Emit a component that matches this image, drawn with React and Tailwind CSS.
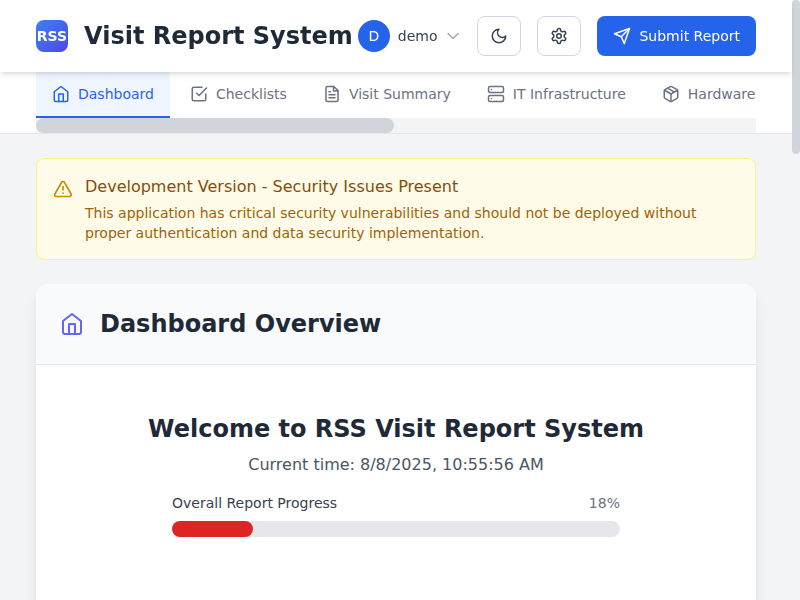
import React from "react";

function Icon({ size = 18, strokeWidth = 2, className = "", children }) {
  return (
    <svg
      width={size}
      height={size}
      viewBox="0 0 24 24"
      fill="none"
      stroke="currentColor"
      strokeWidth={strokeWidth}
      strokeLinecap="round"
      strokeLinejoin="round"
      className={`shrink-0 ${className}`}
    >
      {children}
    </svg>
  );
}

const homePaths = (
  <>
    <path d="m3 9 9-7 9 7v11a2 2 0 0 1-2 2H5a2 2 0 0 1-2-2z" />
    <polyline points="9 22 9 12 15 12 15 22" />
  </>
);

const tabs = [
  { label: "Dashboard", active: true, icon: homePaths },
  {
    label: "Checklists",
    icon: (
      <>
        <polyline points="9 11 12 14 22 4" />
        <path d="M21 12v7a2 2 0 0 1-2 2H5a2 2 0 0 1-2-2V5a2 2 0 0 1 2-2h11" />
      </>
    ),
  },
  {
    label: "Visit Summary",
    icon: (
      <>
        <path d="M14.5 2H6a2 2 0 0 0-2 2v16a2 2 0 0 0 2 2h12a2 2 0 0 0 2-2V7.5L14.5 2z" />
        <polyline points="14 2 14 8 20 8" />
        <line x1="16" y1="13" x2="8" y2="13" />
        <line x1="16" y1="17" x2="8" y2="17" />
        <line x1="10" y1="9" x2="8" y2="9" />
      </>
    ),
  },
  {
    label: "IT Infrastructure",
    icon: (
      <>
        <rect x="2" y="2" width="20" height="8" rx="2" />
        <rect x="2" y="14" width="20" height="8" rx="2" />
        <line x1="6" y1="6" x2="6.01" y2="6" />
        <line x1="6" y1="18" x2="6.01" y2="18" />
      </>
    ),
  },
  {
    label: "Hardware",
    icon: (
      <>
        <path d="m7.5 4.27 9 5.15" />
        <path d="M21 8a2 2 0 0 0-1-1.73l-7-4a2 2 0 0 0-2 0l-7 4A2 2 0 0 0 3 8v8a2 2 0 0 0 1 1.73l7 4a2 2 0 0 0 2 0l7-4A2 2 0 0 0 21 16Z" />
        <path d="m3.3 7 8.7 5 8.7-5" />
        <path d="M12 22V12" />
      </>
    ),
  },
];

function Header() {
  return (
    <header className="relative z-10 flex h-[72px] shrink-0 items-center justify-between bg-white px-9 shadow-md will-change-transform">
      <div className="flex items-center gap-4">
        <div className="flex size-8 items-center justify-center rounded-lg bg-linear-to-br/srgb from-[#3b82f6] to-[#4f46e5] text-sm font-bold text-white">
          RSS
        </div>
        <h1 className="text-2xl font-bold whitespace-nowrap text-[#1f2937]">Visit Report System</h1>
      </div>
      <div className="flex items-center gap-4">
        <div className="flex items-center gap-2">
          <div className="flex size-8 items-center justify-center rounded-full bg-[#2563eb] text-sm text-white">D</div>
          <span className="text-sm text-[#374151]">demo</span>
          <Icon size={16} strokeWidth={2} className="text-[#9ca3af]">
            <path d="m19.5 8.25-7.5 7.5-7.5-7.5" />
          </Icon>
        </div>
        <button className="flex h-10 w-11 items-center justify-center rounded-lg border border-[#d1d5db] bg-white text-[#374151]">
          <Icon>
            <path d="M12 3a6 6 0 0 0 9 9 9 9 0 1 1-9-9Z" />
          </Icon>
        </button>
        <button className="flex h-10 w-11 items-center justify-center rounded-lg border border-[#d1d5db] bg-white text-[#374151]">
          <Icon>
            <path d="M12.22 2h-.44a2 2 0 0 0-2 2v.18a2 2 0 0 1-1 1.73l-.43.25a2 2 0 0 1-2 0l-.15-.08a2 2 0 0 0-2.73.73l-.22.38a2 2 0 0 0 .73 2.73l.15.1a2 2 0 0 1 1 1.72v.51a2 2 0 0 1-1 1.74l-.15.09a2 2 0 0 0-.73 2.73l.22.38a2 2 0 0 0 2.73.73l.15-.08a2 2 0 0 1 2 0l.43.25a2 2 0 0 1 1 1.73V20a2 2 0 0 0 2 2h.44a2 2 0 0 0 2-2v-.18a2 2 0 0 1 1-1.73l.43-.25a2 2 0 0 1 2 0l.15.08a2 2 0 0 0 2.73-.73l.22-.39a2 2 0 0 0-.73-2.73l-.15-.08a2 2 0 0 1-1-1.74v-.5a2 2 0 0 1 1-1.74l.15-.09a2 2 0 0 0 .73-2.73l-.22-.38a2 2 0 0 0-2.73-.73l-.15.08a2 2 0 0 1-2 0l-.43-.25a2 2 0 0 1-1-1.73V4a2 2 0 0 0-2-2z" />
            <circle cx="12" cy="12" r="3" />
          </Icon>
        </button>
        <button className="flex h-10 items-center gap-2 rounded-lg bg-[#2563eb] px-4 text-sm whitespace-nowrap text-white">
          <Icon>
            <path d="m22 2-7 20-4-9-9-4Z" />
            <path d="M22 2 11 13" />
          </Icon>
          Submit Report
        </button>
      </div>
    </header>
  );
}

function Tabs() {
  return (
    <nav className="shrink-0 border-b border-[#e5e7eb] bg-white px-9">
      <div className="flex gap-1 overflow-hidden">
        {tabs.map((tab) => (
          <div
            key={tab.label}
            className={`flex h-[46px] shrink-0 items-center gap-2 border-b-2 px-4 text-sm ${
              tab.active ? "border-[#2563eb] bg-[#eff6ff] text-[#2563eb]" : "border-transparent text-[#6b7280]"
            }`}
          >
            <Icon>{tab.icon}</Icon>
            {tab.label}
          </div>
        ))}
      </div>
      <div className="h-[15px] bg-[#f3f4f6]">
        <div className="h-full w-[358px] rounded-full bg-[#d1d5db]" />
      </div>
    </nav>
  );
}

function Alert() {
  return (
    <div className="flex gap-3 rounded-lg border border-[#fef08a] bg-[#fefce8] p-4">
      <Icon size={20} className="mt-1 text-[#ca8a04]">
        <path d="m21.73 18-8-14a2 2 0 0 0-3.48 0l-8 14A2 2 0 0 0 4 21h16a2 2 0 0 0 1.73-3Z" />
        <path d="M12 9v4" />
        <path d="M12 17h.01" />
      </Icon>
      <div>
        <h3 className="text-base text-[#854d0e]">Development Version - Security Issues Present</h3>
        <p className="mt-1 text-sm text-[#a16207]">
          This application has critical security vulnerabilities and should not be deployed without proper
          authentication and data security implementation.
        </p>
      </div>
    </div>
  );
}

function Dashboard() {
  const progress = 18;
  return (
    <section className="h-[600px] shrink-0 overflow-hidden rounded-xl bg-white shadow-lg">
      <div className="flex h-[81px] items-center gap-4 border-b border-[#e5e7eb] bg-[#f8fafc] px-6">
        <Icon size={24} className="text-[#6366f1]">
          {homePaths}
        </Icon>
        <h2 className="text-2xl font-bold text-[#1f2937]">Dashboard Overview</h2>
      </div>
      <div className="flex flex-col items-center pt-12">
        <h2 className="text-2xl font-bold text-[#1f2937]">Welcome to RSS Visit Report System</h2>
        <p className="mt-2 text-base text-[#4b5563]">Current time: 8/8/2025, 10:55:56 AM</p>
        <div className="mt-4 w-full max-w-md">
          <div className="mb-2 flex justify-between text-sm">
            <span className="text-[#374151]">Overall Report Progress</span>
            <span className="text-[#6b7280]">{progress}%</span>
          </div>
          <div className="h-4 rounded-full bg-[#e5e7eb]">
            <div className="h-4 rounded-full bg-[#dc2626]" style={{ width: `${progress}%` }} />
          </div>
        </div>
      </div>
    </section>
  );
}

export default function App() {
  return (
    <div className="flex h-[600px] w-[800px] overflow-hidden bg-[#f3f4f6] font-['DejaVu_Sans',sans-serif]">
      <div className="flex w-[792px] shrink-0 flex-col">
        <Header />
        <Tabs />
        <main className="flex flex-col gap-6 px-9 pt-6">
          <Alert />
          <Dashboard />
        </main>
      </div>
      <div className="h-full w-2 bg-[#f3f4f6]">
        <div className="h-[154px] w-2 rounded-full bg-[#d1d5db]" />
      </div>
    </div>
  );
}
